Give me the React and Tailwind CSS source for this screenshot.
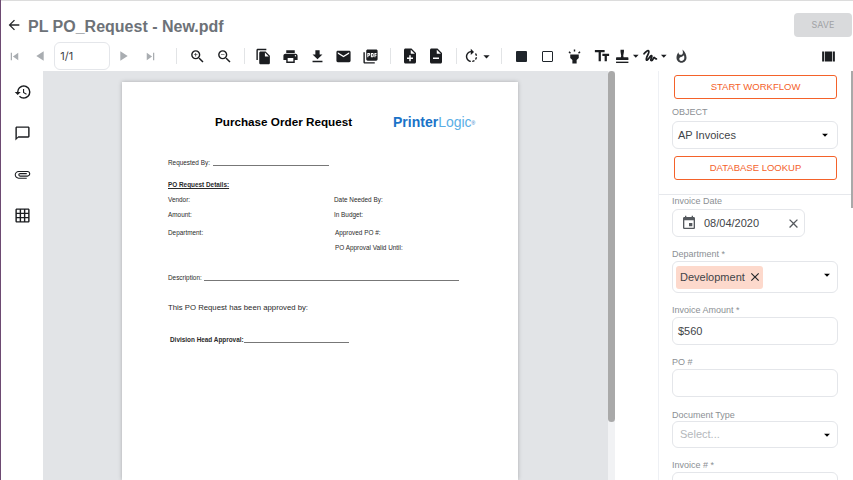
import {
  MdArrowBack, MdArrowDropDown, MdAttachFile, MdChatBubbleOutline, MdClose, MdEmail, MdEvent,
  MdFileCopy, MdFileDownload, MdGridOn, MdHighlight, MdHistory, MdNoteAdd, MdOutlineRotateRight,
  MdPictureAsPdf, MdPlayArrow, MdPrint, MdSkipNext, MdSkipPrevious, MdTextFields, MdViewArray,
  MdWhatshot, MdZoomIn, MdZoomOut,
} from 'react-icons/md'

const INPUT = 'flex items-center rounded-md border border-[#e4e6ea] bg-white text-[11px] text-[#3f4448]'
const LABEL = 'text-[9px] leading-[10px] text-[#8b8f94]'
const ORANGE_BTN = 'flex items-center justify-center w-[163px] ml-[2px] h-6 rounded-[3px] border border-[#f4622a] text-[9.5px] text-[#f4622a]'

function Slot({ children, className = '' }) {
  return <div className={`flex w-[26.6px] shrink-0 items-center justify-center text-[#1b1d20] ${className}`}>{children}</div>
}

function Sep({ className = '' }) {
  return <div className={`h-4 w-px shrink-0 bg-[#e2e4e6] ${className}`} />
}

function FileMinus() {
  return (
    <svg width="18" height="18" viewBox="0 0 24 24" fill="currentColor">
      <path d="M14 2H6c-1.1 0-2 .9-2 2v16c0 1.1.9 2 2 2h12c1.1 0 2-.9 2-2V8l-6-6zm2 14H8v-2h8v2zm-3-7V3.5L18.5 9H13z" />
    </svg>
  )
}

function Stamp() {
  return (
    <svg width="17" height="17" viewBox="0 0 24 24" fill="currentColor">
      <path d="M9.5 2h5v3l-1 6 .5 2h6a1 1 0 0 1 1 1v3H3v-3a1 1 0 0 1 1-1h6l.5-2-1-6z" />
      <rect x="3" y="19.500" width="18" height="2" />
    </svg>
  )
}

function Signature() {
  return (
    <svg width="17" height="17" viewBox="0 0 24 24" fill="none" stroke="currentColor" strokeWidth="2.6" strokeLinecap="round" strokeLinejoin="round">
      <path d="M3 8c2-3 6-6 7-3.500S5 14 6.500 17c1 1.500 4-3 5.500-5s3-2 2 1-2 5 0 5 2.500-5 4-4.500 1 2.500 3 2" />
    </svg>
  )
}

function Toolbar() {
  return (
    <div className="flex h-[30px] items-center">
      <Slot className="text-[#a9adb1]"><MdSkipPrevious size={15} /></Slot>
      <Slot className="text-[#a9adb1]"><MdPlayArrow size={16} className="rotate-180" /></Slot>
      <div className="flex h-7 w-[56px] shrink-0 items-center rounded-md border border-[#e4e6ea] pl-[5px] text-[11px] text-[#3f4448]">1/1</div>
      <Slot className="text-[#a9adb1]"><MdPlayArrow size={16} /></Slot>
      <Slot className="text-[#a9adb1]"><MdSkipNext size={15} /></Slot>
      <Sep className="ml-[13px] mr-[7px]" />
      <Slot><MdZoomIn size={17} /></Slot>
      <Slot><MdZoomOut size={17} /></Slot>
      <Sep className="ml-[6px] mr-[6px]" />
      <Slot><MdFileCopy size={17} /></Slot>
      <Slot><MdPrint size={17} /></Slot>
      <Slot><MdFileDownload size={17} /></Slot>
      <Slot><MdEmail size={17} /></Slot>
      <Slot><MdPictureAsPdf size={17} /></Slot>
      <Sep className="ml-[6px] mr-[6px]" />
      <Slot><MdNoteAdd size={18} /></Slot>
      <Slot><FileMinus /></Slot>
      <Sep className="ml-[6px] mr-[6px]" />
      <div className="flex w-[38px] shrink-0 items-center text-[#1b1d20]">
        <MdOutlineRotateRight size={17} />
        <MdArrowDropDown size={15} className="-ml-[1px]" />
      </div>
      <Sep className="mr-[6px]" />
      <Slot><span className="block h-[11px] w-[11px] rounded-[1px] bg-[#1f252b]" /></Slot>
      <Slot><span className="block h-[11px] w-[11px] rounded-[1px] border border-[#1f252b]" /></Slot>
      <Slot><MdHighlight size={17} /></Slot>
      <Slot className="pl-[3px]"><MdTextFields size={18} /></Slot>
      <div className="flex w-[28px] shrink-0 items-center justify-end text-[#1b1d20]">
        <Stamp />
        <MdArrowDropDown size={14} className="-ml-[2px]" />
      </div>
      <div className="flex w-[28px] shrink-0 items-center justify-end text-[#1b1d20]">
        <Signature />
        <MdArrowDropDown size={14} className="-ml-[2px]" />
      </div>
      <Slot className="-ml-[2px]"><MdWhatshot size={15} className="text-[#3a3d40]" /></Slot>
      <div className="flex-1" />
      <Slot className="mr-[11px]"><MdViewArray size={17} /></Slot>
    </div>
  )
}

function Document() {
  return (
    <div className="ml-[79px] mt-[11px] h-[398px] w-[396px] shrink-0 bg-white pl-[46px] pt-[32px] font-['Liberation_Sans',Arial,sans-serif] text-[6.4px] leading-[8px] text-[#2a2a2a] shadow-[0_0_4px_rgba(0,0,0,0.25)]">
      <div className="flex h-4 items-center">
        <span className="ml-[47px] w-[178px] text-[11.7px] font-bold text-black">Purchase Order Request</span>
        <span className="text-[14px] text-[#1a73c8]">
          <b>Printer</b><span className="text-[#5aaee6]">Logic</span><sup className="text-[5px]">®</sup>
        </span>
      </div>
      <div className="mt-[29px] flex items-end gap-[3px]">
        <span>Requested By:</span>
        <span className="mb-[1px] h-px w-[116px] bg-[#777]" />
      </div>
      <div className="mt-[14px] font-bold underline">PO Request Details:</div>
      <div className="mt-[7px] grid grid-cols-[166px_1fr]">
        <span>Vendor:</span><span>Date Needed By:</span>
      </div>
      <div className="mt-[7px] grid grid-cols-[166px_1fr]">
        <span>Amount:</span><span>In Budget:</span>
      </div>
      <div className="mt-[10px] grid grid-cols-[167px_1fr]">
        <span>Department:</span><span>Approved PO #:</span>
      </div>
      <div className="ml-[167px] mt-[7px]">PO Approval Valid Until:</div>
      <div className="mt-[22px] flex items-end gap-[2px]">
        <span>Description:</span>
        <span className="mb-[1px] h-px w-[255px] bg-[#777]" />
      </div>
      <div className="mt-[22px] text-[7.75px]">This PO Request has been approved by:</div>
      <div className="ml-[2px] mt-[24px] flex items-end font-bold">
        <span>Division Head Approval:</span>
        <span className="mb-[1px] h-px w-[105px] bg-[#777]" />
      </div>
    </div>
  )
}

function SidePanel() {
  return (
    <div className="flex h-full w-[195px] shrink-0 overflow-hidden border-l border-[#eef0f4] font-['Liberation_Sans',Arial,sans-serif]">
      <div className="min-w-0 flex-1 pt-1">
        <div className="border-b border-[#e6e8ec] pb-[14px] pl-[13px]">
          <div className={ORANGE_BTN}>START WORKFLOW</div>
          <div className={`${LABEL} mt-[8px]`}>OBJECT</div>
          <div className={`${INPUT} mt-[4px] h-7 w-[166px] justify-between pl-[5px] pr-[5px]`}>
            <span>AP Invoices</span>
            <MdArrowDropDown size={14} className="text-black" />
          </div>
          <div className={`${ORANGE_BTN} mt-[7px]`}>DATABASE LOOKUP</div>
        </div>
        <div className="pl-[13px]">
          <div className={`${LABEL} mt-[1px]`}>Invoice Date</div>
          <div className={`${INPUT} mt-[3px] h-7 w-[133px] pl-[8px] pr-[3px]`}>
            <MdEvent size={16} className="text-[#55595e]" />
            <span className="ml-[7px] flex-1">08/04/2020</span>
            <MdClose size={15} className="text-[#55595e]" />
          </div>
          <div className={`${LABEL} mt-[12px]`}>Department *</div>
          <div className={`${INPUT} mt-[2px] h-8 w-[166px] justify-between pl-[3px] pr-[3px]`}>
            <span className="flex h-[23px] w-[87px] items-center gap-[3px] rounded-[3px] bg-[#fdd9cc] pl-[4px]">
              Development
              <MdClose size={14} className="text-[#26282b]" />
            </span>
            <MdArrowDropDown size={14} className="mb-[4px] text-black" />
          </div>
          <div className={`${LABEL} mt-[12px]`}>Invoice Amount *</div>
          <div className={`${INPUT} mt-[2px] h-7 w-[166px] pl-[5px]`}>$560</div>
          <div className={`${LABEL} mt-[12px]`}>PO #</div>
          <div className={`${INPUT} mt-[2px] h-7 w-[166px]`} />
          <div className={`${LABEL} mt-[13px]`}>Document Type</div>
          <div className={`${INPUT} mt-[1px] h-[27px] w-[166px] justify-between pl-[7px] pr-[3px]`}>
            <span className="text-[#b4b8bc]">Select...</span>
            <MdArrowDropDown size={14} className="text-black" />
          </div>
          <div className={`${LABEL} mt-[12px]`}>Invoice # *</div>
          <div className={`${INPUT} mt-[2px] h-7 w-[166px]`} />
        </div>
      </div>
      <div className="h-[137px] w-[2px] shrink-0 bg-[#a9a9a9]" />
    </div>
  )
}

export default function App() {
  return (
    <div className="flex h-[480px] w-[853px] flex-col overflow-hidden border-l border-l-[#6d4a72] bg-white font-['Inter',sans-serif]">
      <div className="h-px shrink-0 bg-[#dcdcdc]" />
      <div className="flex h-[40px] shrink-0 items-end justify-between pb-[2px] pl-[5px] pr-[1px]">
        <div className="flex items-center gap-[6px]">
          <MdArrowBack size={16} className="mb-[4px] text-[#26282b]" />
          <span className="font-['Liberation_Sans',Arial,sans-serif] text-[16px] font-bold leading-6 text-[#6d7278]">PL PO_Request - New.pdf</span>
        </div>
        <div className="mb-[2px] flex h-6 w-[58px] items-center justify-center rounded bg-[#d9dadc] text-[9px] text-[#a1a3a6]">SAVE</div>
      </div>
      <Toolbar />
      <div className="flex min-h-0 flex-1">
        <div className="flex w-[42px] shrink-0 flex-col items-center gap-[24px] pl-[1px] pt-[12px] text-[#1b1d20]">
          <MdHistory size={18} />
          <MdChatBubbleOutline size={17} />
          <MdAttachFile size={17} className="rotate-90" />
          <MdGridOn size={17} />
        </div>
        <div className="flex w-[572px] shrink-0 overflow-hidden bg-[#e2e4e7]">
          <Document />
          <div className="ml-[90px] h-full w-[7px] shrink-0 bg-[#f1f2f4]">
            <div className="h-[351px] w-[7px] rounded-sm bg-[#a9a9a9]" />
          </div>
        </div>
        <div className="w-[43px] shrink-0" />
        <SidePanel />
      </div>
    </div>
  )
}
